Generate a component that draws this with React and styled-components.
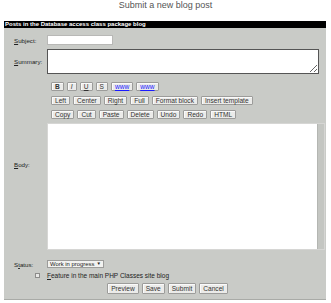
import React from 'react';
import styled, { createGlobalStyle } from 'styled-components';

const GlobalStyle = createGlobalStyle`
  html, body {
    margin: 0;
    padding: 0;
    background: #fff;
  }
  body {
    font-family: "Liberation Sans", Arial, sans-serif;
  }
`;

const Page = styled.div`
  width: 331px;
  height: 303px;
  overflow: hidden;
`;

const Title = styled.h1`
  margin: 0;
  height: 21px;
  padding-top: 1px;
  box-sizing: border-box;
  font: normal 9px/9px "Liberation Sans", Arial, sans-serif;
  color: #555;
  text-align: center;
`;

const Panel = styled.div`
  margin-left: 4px;
  width: 322px;
  height: 279px;
  box-sizing: border-box;
  background: #c9cbc7;
  border-bottom: 1px solid #a9aba7;
`;

const Header = styled.div`
  height: 7px;
  padding-left: 1px;
  background: #000;
  color: #fff;
  font: bold 6px/7px "Liberation Sans", Arial, sans-serif;
  white-space: nowrap;
`;

const Form = styled.form`
  display: flex;
  flex-direction: column;
  padding: 0 7px 0 10px;
`;

const FieldRow = styled.div`
  display: grid;
  grid-template-columns: 33px 1fr;
  align-items: center;
  margin-top: ${(p) => p.$top}px;
`;

const Label = styled.label`
  font: 6.2px/7px "Liberation Sans", Arial, sans-serif;
  color: #222;
  white-space: nowrap;

  u {
    text-decoration: underline;
  }
`;

const TextInput = styled.input`
  width: 66px;
  height: 10px;
  box-sizing: border-box;
  margin: 0;
  padding: 0 2px;
  border: 1px solid #b8b8b6;
  background: #fff;
  font: 6.5px "Liberation Sans", Arial, sans-serif;
`;

const TextArea = styled.textarea`
  display: block;
  width: 272px;
  height: 25px;
  box-sizing: border-box;
  margin: 0;
  padding: 1px;
  border: 1px solid #555;
  background: #fff;
  font: 6.5px "Liberation Sans", Arial, sans-serif;
`;

const Column = styled.div`
  display: flex;
  flex-direction: column;
`;

const Toolbar = styled.div`
  display: flex;
  gap: 3px;
  padding-left: 4px;
  margin-top: ${(p) => p.$top}px;
`;

const ToolButton = styled.button`
  height: 9px;
  min-width: 10px;
  box-sizing: border-box;
  margin: 0;
  padding: 0 3px;
  border: 1px solid #9c9c9a;
  box-shadow: inset 1px 1px 0 #fafafa;
  border-radius: 1px;
  background: #ebebe9;
  color: #333;
  font: 6.6px/7px "Liberation Sans", Arial, sans-serif;
  font-weight: ${(p) => (p.$bold ? 'bold' : 'normal')};
  font-style: ${(p) => (p.$italic ? 'italic' : 'normal')};
  text-decoration: ${(p) => (p.$underline ? 'underline' : 'none')};
  white-space: nowrap;
`;

const LinkText = styled.span`
  color: #1a1aff;
  text-decoration: underline;
`;

const Editor = styled.div`
  display: flex;
  height: 127px;
  margin-top: 4px;
  margin-right: -6px;
  box-sizing: border-box;
  border: 1px solid #d6d6d4;
  background: #fff;
`;

const EditorArea = styled.div`
  flex: 1;
`;

const ScrollTrack = styled.div`
  width: 6px;
  background: #c4c6c2;
  border-left: 1px solid #b4b6b2;
`;

const SelectBox = styled.div`
  display: flex;
  align-items: center;
  gap: 2px;
  width: fit-content;
  height: 8px;
  box-sizing: border-box;
  padding: 0 2px;
  border: 1px solid #9c9c9a;
  background: #f2f2f0;
  font: 5.9px/6px "Liberation Sans", Arial, sans-serif;
  color: #222;
  white-space: nowrap;
`;

const Arrow = styled.span`
  font-size: 4.5px;
  line-height: 6px;
`;

const CheckRow = styled.div`
  display: grid;
  grid-template-columns: 33px 1fr;
  align-items: center;
  margin-top: 4px;
`;

const CheckBox = styled.span`
  justify-self: end;
  margin-right: 7px;
  width: 5px;
  height: 5px;
  box-sizing: border-box;
  border: 1px solid #8c8c8a;
  background: #e9e9e7;
`;

const CheckLabel = styled.span`
  font: 6.5px/7px "Liberation Sans", Arial, sans-serif;
  color: #222;
  white-space: nowrap;
`;

const Actions = styled.div`
  display: flex;
  justify-content: center;
  gap: 3px;
  margin: 4px 0 0 2px;
`;

const ActionButton = styled(ToolButton)`
  height: 11px;
  padding: 0 3px;
  line-height: 9px;
`;

const formatButtons = [
  { text: 'B', $bold: true },
  { text: 'I', $italic: true },
  { text: 'U', $underline: true },
  { text: 'S' },
];

const alignButtons = ['Left', 'Center', 'Right', 'Full', 'Format block', 'Insert template'];
const editButtons = ['Copy', 'Cut', 'Paste', 'Delete', 'Undo', 'Redo', 'HTML'];
const submitButtons = ['Preview', 'Save', 'Submit', 'Cancel'];

const App = () => {
  return (
    <Page>
      <GlobalStyle />
      <Title>Submit a new blog post</Title>
      <Panel>
        <Header>Posts in the Database access class package blog</Header>
        <Form onSubmit={(e) => e.preventDefault()}>
          <FieldRow $top={7}>
            <Label><u>S</u>ubject:</Label>
            <TextInput type="text" />
          </FieldRow>
          <FieldRow $top={4}>
            <Label><u>S</u>ummary:</Label>
            <TextArea />
          </FieldRow>
          <FieldRow $top={4}>
            <Label><u>B</u>ody:</Label>
            <Column>
              <Toolbar $top={4}>
                {formatButtons.map(({ text, ...style }) => (
                  <ToolButton key={text} type="button" {...style}>{text}</ToolButton>
                ))}
                <ToolButton type="button"><LinkText>www</LinkText></ToolButton>
                <ToolButton type="button"><LinkText>www</LinkText></ToolButton>
              </Toolbar>
              <Toolbar $top={5}>
                {alignButtons.map((b) => (
                  <ToolButton key={b} type="button">{b}</ToolButton>
                ))}
              </Toolbar>
              <Toolbar $top={5}>
                {editButtons.map((b) => (
                  <ToolButton key={b} type="button">{b}</ToolButton>
                ))}
              </Toolbar>
              <Editor>
                <EditorArea />
                <ScrollTrack />
              </Editor>
            </Column>
          </FieldRow>
          <FieldRow $top={10}>
            <Label>S<u>t</u>atus:</Label>
            <SelectBox>
              Work in progress <Arrow>▼</Arrow>
            </SelectBox>
          </FieldRow>
          <CheckRow>
            <CheckBox />
            <CheckLabel><u>F</u>eature in the main PHP Classes site blog</CheckLabel>
          </CheckRow>
          <Actions>
            {submitButtons.map((b) => (
              <ActionButton key={b} type="button">{b}</ActionButton>
            ))}
          </Actions>
        </Form>
      </Panel>
    </Page>
  );
};

export default App;
